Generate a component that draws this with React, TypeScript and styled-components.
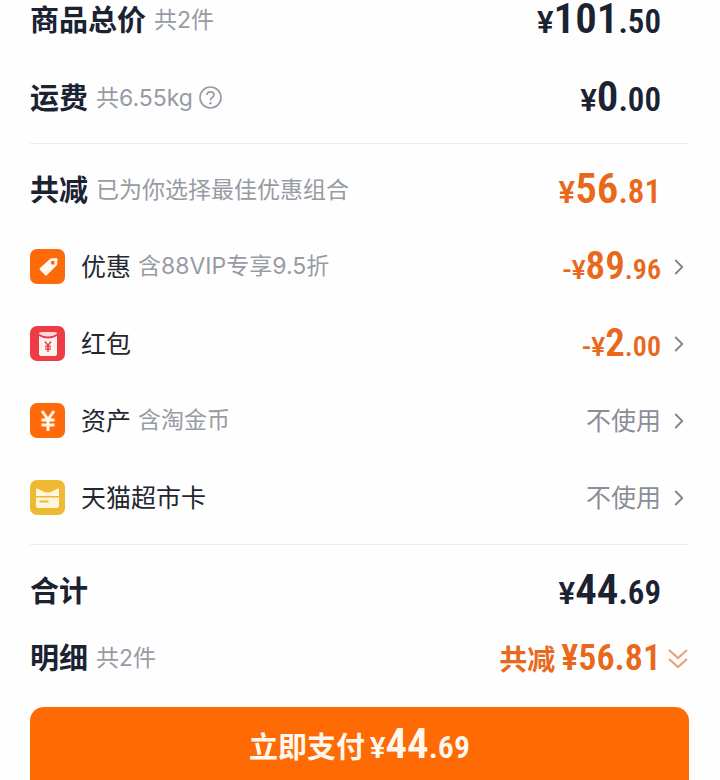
import styled, { createGlobalStyle } from "styled-components";
import { ChevronRight } from "lucide-react";

const GlobalStyle = createGlobalStyle`
  html, body {
    margin: 0;
    padding: 0;
    background: #fefefe;
    overflow: hidden;
  }
  body {
    font-family: "Inter", "Noto Sans CJK SC", sans-serif;
  }
`;

const Page = styled.div`
  width: 720px;
  height: 780px;
  box-sizing: border-box;
  padding: 0 31px 0 30px;
  overflow: hidden;
  display: flex;
  flex-flow: column nowrap;
`;

const Row = styled.div<{ $height: number; $top?: number }>`
  display: flex;
  align-items: center;
  justify-content: space-between;
  height: ${({ $height }) => $height}px;
  margin-top: ${({ $top }) => $top ?? 0}px;
  flex-shrink: 0;
`;

const Left = styled.div`
  display: flex;
  align-items: center;
`;

const Right = styled.div`
  display: flex;
  align-items: center;
`;

const SummaryRight = styled(Right)`
  padding: 0 28px 3px 0;
`;

const Title = styled.span`
  font-family: "Noto Sans CJK SC", sans-serif;
  font-size: 29px;
  font-weight: 700;
  color: #1b2232;
  line-height: 36px;
  padding-bottom: 4px;
`;

const Hint = styled.span`
  font-size: 23px;
  color: #979ba3;
  margin-left: 8px;
  line-height: 36px;
  padding-bottom: 1px;
  display: flex;
  align-items: center;
`;

const HelpIcon = styled.svg`
  width: 25px;
  height: 25px;
  margin-left: 5px;
`;

const Divider = styled.div<{ $top: number }>`
  height: 1px;
  margin-top: ${({ $top }) => $top}px;
  background: #ececec;
  flex-shrink: 0;
`;

const Amount = styled.span<{ $tone?: "dark" | "orange" }>`
  font-family: "Roboto", sans-serif;
  font-stretch: 86%;
  font-weight: 600;
  color: ${({ $tone }) => ($tone === "orange" ? "#e8691c" : "#1b2232")};
  display: flex;
  align-items: baseline;
  line-height: 1;
`;

const Yen = styled.span<{ $size: number }>`
  font-size: ${({ $size }) => $size}px;
  font-stretch: 100%;
`;

const Whole = styled.span<{ $size: number }>`
  font-size: ${({ $size }) => $size}px;
`;

const Cents = styled.span<{ $size: number }>`
  font-size: ${({ $size }) => $size}px;
`;

const IconBox = styled.div<{ $bg: string }>`
  width: 35px;
  height: 35px;
  border-radius: 7px;
  background: ${({ $bg }) => $bg};
  flex-shrink: 0;
  display: flex;
  align-items: center;
  justify-content: center;
`;

const ItemName = styled.span`
  font-family: "Noto Sans CJK SC", sans-serif;
  font-size: 25px;
  color: #23272f;
  margin-left: 16px;
  line-height: 36px;
  padding-bottom: 4px;
`;

const ItemHint = styled(Hint)`
  margin-left: 7px;
`;

const NotUsed = styled.span`
  font-family: "Noto Sans CJK SC", sans-serif;
  font-size: 25px;
  color: #8a8e96;
  line-height: 36px;
  padding-bottom: 4px;
`;

const Arrow = styled(ChevronRight)`
  width: 26px;
  height: 26px;
  color: #80858d;
  stroke-width: 1.7;
  margin: 0 -2.5px 0 4.5px;
`;

const TotalDetail = styled.span`
  font-family: "Noto Sans CJK SC", sans-serif;
  font-size: 28px;
  font-weight: 700;
  color: #e8691c;
  display: flex;
  align-items: center;
  line-height: 40px;
`;

const DetailAmount = styled.span`
  font-family: "Roboto", sans-serif;
  font-stretch: 84%;
  font-weight: 600;
  font-size: 36px;
  margin-left: 6px;
`;

const DoubleChevron = styled.svg`
  width: 22px;
  height: 24px;
  margin: 2px 0 0 6px;
`;

const PayButton = styled.button`
  flex-shrink: 0;
  width: 100%;
  height: 90px;
  margin-top: 29px;
  border: none;
  border-radius: 14px;
  background: #fe6a03;
  color: #fff8ee;
  display: flex;
  align-items: baseline;
  justify-content: center;
  padding: 15px 0 0;
  font-family: "Noto Sans CJK SC", sans-serif;
`;

const PayLabel = styled.span`
  font-size: 29px;
  font-weight: 700;
  margin-right: 5px;
`;

const PayAmount = styled(Amount)`
  color: #fff8ee;
`;

type Sizes = { yen: number; whole: number; cents: number };

function Price({
  prefix = "",
  whole,
  cents,
  sizes,
  tone,
}: {
  prefix?: string;
  whole: string;
  cents: string;
  sizes: Sizes;
  tone?: "dark" | "orange";
}) {
  return (
    <Amount $tone={tone}>
      <Yen $size={sizes.yen}>{prefix}¥</Yen>
      <Whole $size={sizes.whole}>{whole}</Whole>
      <Cents $size={sizes.cents}>.{cents}</Cents>
    </Amount>
  );
}

const TagIcon = () => (
  <svg width="24" height="24" viewBox="0 0 24 24">
    <path
      d="M14.5 3.5 L20 3 Q21.5 3 21.5 4.5 L21 10 L11 20 Q10 21 9 20 L4 15 Q3 14 4 13 Z"
      fill="#fff8f0"
    />
    <circle cx="16.8" cy="7.7" r="2" fill="#fe6a0a" />
  </svg>
);

const PacketIcon = () => (
  <svg width="18" height="24" viewBox="0 0 18 24">
    <path d="M0 2 Q0 0 2 0 H16 Q18 0 18 2 Q9 7 0 2 Z" fill="#fbd9d9" />
    <path d="M0 4 Q9 9 18 4 V22 Q18 24 16 24 H2 Q0 24 0 22 Z" fill="#fdf3f0" />
    <path
      d="M6 9.5 L9 13.5 L12 9.5 M9 13.5 V20 M6 14.5 H12 M6 17 H12"
      stroke="#e4434b"
      strokeWidth="1.5"
      fill="none"
    />
  </svg>
);

const CoinIcon = () => (
  <svg width="20" height="24" viewBox="0 0 20 24">
    <path
      d="M4 2 L10 10.5 L16 2 M10 10.5 V22 M3.5 11 H16.5 M3.5 16 H16.5"
      stroke="#fff6ea"
      strokeWidth="3"
      fill="none"
    />
  </svg>
);

const CardIcon = () => (
  <svg width="23" height="20" viewBox="0 0 23 20">
    <path d="M0 1.5 Q0 0 1.5 0.5 L6 3 Q11.5 6 17 3 L21.5 0.5 Q23 0 23 1.5 V8 H0 Z" fill="#fff6dc" />
    <path d="M0 9.5 H23 V18 Q23 20 21 20 H2 Q0 20 0 18 Z" fill="#fff6dc" />
    <rect x="3.5" y="12.5" width="9" height="2" fill="#eeb933" />
  </svg>
);

const rowSizes: Sizes = { yen: 26, whole: 39, cents: 28 };
const summarySizes: Sizes = { yen: 31, whole: 43, cents: 33 };

export default function App() {
  return (
    <Page>
      <GlobalStyle />
      <Row $height={40}>
        <Left>
          <Title>商品总价</Title>
          <Hint>共2件</Hint>
        </Left>
        <SummaryRight>
          <Price whole="101" cents="50" sizes={summarySizes} />
        </SummaryRight>
      </Row>
      <Row $height={40} $top={38}>
        <Left>
          <Title>运费</Title>
          <Hint>
            共6.55kg
            <HelpIcon viewBox="0 0 25 25">
              <circle cx="12.5" cy="12.5" r="10.5" fill="none" stroke="#979ba3" strokeWidth="1.7" />
              <path
                d="M9 10 Q9 6.8 12.5 6.8 Q16 6.8 16 9.8 Q16 11.8 13.8 12.8 Q12.5 13.5 12.5 15.5"
                fill="none"
                stroke="#979ba3"
                strokeWidth="1.7"
              />
              <circle cx="12.5" cy="18.3" r="1.2" fill="#979ba3" />
            </HelpIcon>
          </Hint>
        </Left>
        <SummaryRight>
          <Price whole="0" cents="00" sizes={summarySizes} />
        </SummaryRight>
      </Row>
      <Divider $top={25} />
      <Row $height={40} $top={26}>
        <Left>
          <Title>共减</Title>
          <Hint>已为你选择最佳优惠组合</Hint>
        </Left>
        <SummaryRight>
          <Price tone="orange" whole="56" cents="81" sizes={summarySizes} />
        </SummaryRight>
      </Row>
      <Row $height={77} $top={18}>
        <Left>
          <IconBox $bg="#fe6a0a">
            <TagIcon />
          </IconBox>
          <ItemName>优惠</ItemName>
          <ItemHint>含88VIP专享9.5折</ItemHint>
        </Left>
        <Right>
          <Price tone="orange" prefix="-" whole="89" cents="96" sizes={rowSizes} />
          <Arrow />
        </Right>
      </Row>
      <Row $height={77}>
        <Left>
          <IconBox $bg="#ee3b45">
            <PacketIcon />
          </IconBox>
          <ItemName>红包</ItemName>
        </Left>
        <Right>
          <Price tone="orange" prefix="-" whole="2" cents="00" sizes={rowSizes} />
          <Arrow />
        </Right>
      </Row>
      <Row $height={77}>
        <Left>
          <IconBox $bg="#fe6a0a">
            <CoinIcon />
          </IconBox>
          <ItemName>资产</ItemName>
          <ItemHint>含淘金币</ItemHint>
        </Left>
        <Right>
          <NotUsed>不使用</NotUsed>
          <Arrow />
        </Right>
      </Row>
      <Row $height={77}>
        <Left>
          <IconBox $bg="#eeb933">
            <CardIcon />
          </IconBox>
          <ItemName>天猫超市卡</ItemName>
        </Left>
        <Right>
          <NotUsed>不使用</NotUsed>
          <Arrow />
        </Right>
      </Row>
      <Divider $top={8} />
      <Row $height={40} $top={26}>
        <Left>
          <Title>合计</Title>
        </Left>
        <SummaryRight>
          <Price whole="44" cents="69" sizes={summarySizes} />
        </SummaryRight>
      </Row>
      <Row $height={40} $top={27}>
        <Left>
          <Title>明细</Title>
          <Hint>共2件</Hint>
        </Left>
        <TotalDetail>
          共减
          <DetailAmount>¥56.81</DetailAmount>
          <DoubleChevron viewBox="0 0 22 24">
            <path
              d="M2 3 L11 11 L20 3 M2 12 L11 20 L20 12"
              fill="none"
              stroke="#eaa277"
              strokeWidth="2.2"
            />
          </DoubleChevron>
        </TotalDetail>
      </Row>
      <PayButton>
        <PayLabel>立即支付</PayLabel>
        <PayAmount>
          <Yen $size={29}>¥</Yen>
          <Whole $size={43}>44</Whole>
          <Cents $size={32}>.69</Cents>
        </PayAmount>
      </PayButton>
    </Page>
  );
}
